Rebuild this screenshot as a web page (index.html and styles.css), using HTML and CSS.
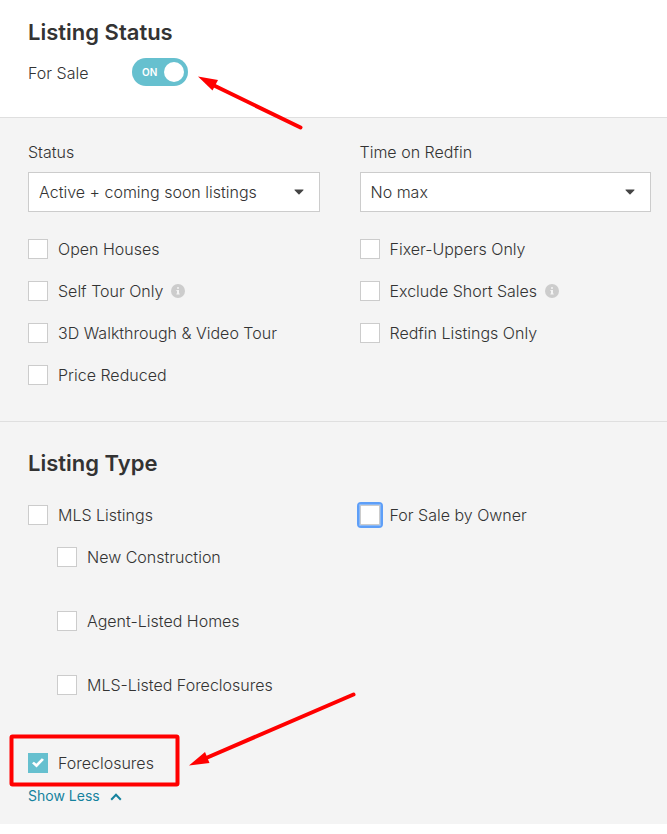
FILE: index.html
```html
<!DOCTYPE html>
<html lang="en">
<head>
  <meta charset="UTF-8">
  <meta name="viewport" content="width=device-width, initial-scale=1.0">
  <title>Listing Filters</title>
  <link rel="stylesheet" href="styles.css">
</head>
<body>
  <main class="filters">
    <section class="statusHeader">
      <h2 class="title">Listing Status</h2>
      <div class="toggleRow">
        <label class="toggleLabel" for="forSale">For Sale</label>
        <span class="toggle">
          <input type="checkbox" role="switch" id="forSale" class="toggleInput" checked>
          <span class="toggleText" aria-hidden="true">ON</span>
        </span>
      </div>
    </section>

    <section class="panel statusPanel">
      <div class="columns">
        <div class="column">
          <label class="fieldLabel" for="status">Status</label>
          <div class="selectBox">
            <select id="status" class="select">
              <option>Active + coming soon listings</option>
              <option>Active listings</option>
            </select>
            <svg class="caret" viewBox="0 0 10 6" aria-hidden="true"><path d="M1 .5h8c.5 0 .7.5.4.8L5.5 5.2a.7.7 0 0 1-1 0L.6 1.3C.3 1 .5.5 1 .5z"/></svg>
          </div>
          <div class="options">
            <label class="option"><input type="checkbox" class="check">Open Houses</label>
            <label class="option">
              <input type="checkbox" class="check">Self Tour Only
              <svg class="info" viewBox="0 0 14 14" aria-hidden="true"><circle cx="7" cy="7" r="7"/><path d="M6 3.2h2v1.6H6zM5.4 6H8v3.6h.7v1H5.4v-1H6V7h-.6z"/></svg>
            </label>
            <label class="option"><input type="checkbox" class="check">3D Walkthrough &amp; Video Tour</label>
            <label class="option"><input type="checkbox" class="check">Price Reduced</label>
          </div>
        </div>

        <div class="column">
          <label class="fieldLabel" for="time">Time on Redfin</label>
          <div class="selectBox">
            <select id="time" class="select">
              <option>No max</option>
              <option>Less than 7 days</option>
            </select>
            <svg class="caret" viewBox="0 0 10 6" aria-hidden="true"><path d="M1 .5h8c.5 0 .7.5.4.8L5.5 5.2a.7.7 0 0 1-1 0L.6 1.3C.3 1 .5.5 1 .5z"/></svg>
          </div>
          <div class="options">
            <label class="option"><input type="checkbox" class="check">Fixer-Uppers Only</label>
            <label class="option">
              <input type="checkbox" class="check">Exclude Short Sales
              <svg class="info" viewBox="0 0 14 14" aria-hidden="true"><circle cx="7" cy="7" r="7"/><path d="M6 3.2h2v1.6H6zM5.4 6H8v3.6h.7v1H5.4v-1H6V7h-.6z"/></svg>
            </label>
            <label class="option"><input type="checkbox" class="check">Redfin Listings Only</label>
          </div>
        </div>
      </div>
    </section>

    <section class="panel typePanel">
      <h2 class="title">Listing Type</h2>
      <div class="columns">
        <div class="column">
          <label class="option"><input type="checkbox" class="check">MLS Listings</label>
          <div class="subOptions">
            <label class="option"><input type="checkbox" class="check">New Construction</label>
            <label class="option"><input type="checkbox" class="check">Agent-Listed Homes</label>
            <label class="option"><input type="checkbox" class="check">MLS-Listed Foreclosures</label>
          </div>
          <label class="option"><input type="checkbox" class="check" checked>Foreclosures</label>
          <a href="#" class="showLess">Show Less
            <svg class="chevron" viewBox="0 0 12 8" aria-hidden="true"><path d="M1.2 6.8 6 1.8l4.8 5"/></svg>
          </a>
        </div>
        <div class="column">
          <label class="option"><input type="checkbox" class="check focused">For Sale by Owner</label>
        </div>
      </div>
    </section>

    <!-- red arrows and box over the form -->
    <svg class="marks" width="667" height="824" viewBox="0 0 667 824" aria-hidden="true">
      <path class="markLine" d="M300.500 127.500 212 84.500"/>
      <path class="markHead" d="M198 76.500 218 80 212.500 90.500z"/>
      <path class="markLine" d="M353.500 694.500 205 758.500"/>
      <path class="markHead" d="M189 765.500 205 752 209.500 763z"/>
      <rect class="markBox" x="11.500" y="736.500" width="166" height="48" rx="1"/>
    </svg>
  </main>
</body>
</html>
```
FILE: styles.css
```css
* {
  margin: 0;
  padding: 0;
  box-sizing: border-box;
}

body {
  font-family: Inter, sans-serif;
  font-size: 16px;
  font-weight: 300;
  line-height: 24px;
  color: #333;
  background-color: #fff;
}

.filters {
  position: relative;
}

.title {
  font-size: 22px;
  font-weight: 600;
  line-height: 28px;
}

.statusHeader {
  padding: 18px 16px 31px 28px;
}

.toggleRow {
  display: flex;
  align-items: center;
  margin-top: 12px;
}

.toggleLabel {
  width: 104px;
  padding-top: 2px;
}

.toggle {
  display: grid;
  align-items: center;
}

.toggleInput,
.toggleText {
  grid-area: 1 / 1;
}

.toggleInput {
  appearance: none;
  display: flex;
  align-items: center;
  width: 56px;
  height: 28px;
  padding: 4px;
  border-radius: 14px;
  background-color: #ccc;
  cursor: pointer;
}

.toggleInput:checked {
  justify-content: flex-end;
  background-color: #66c0cf;
}

.toggleInput::after {
  content: '';
  width: 20px;
  height: 20px;
  border-radius: 50%;
  background-color: #fff;
}

.toggleText {
  padding-left: 10px;
  font-size: 10px;
  font-weight: 600;
  color: #fff;
  pointer-events: none;
}

.panel {
  border-top: 1px solid #dfdfdf;
  background-color: #f4f4f4;
}

.statusPanel {
  padding: 22px 16px 25px 28px;
}

.typePanel {
  padding: 27px 16px 16px 28px;
}

.typePanel .columns {
  margin-top: 17px;
}

.columns {
  display: grid;
  grid-template-columns: 1fr 1fr;
  gap: 40px;
}

.fieldLabel {
  display: block;
  margin-bottom: 8px;
}

.selectBox {
  display: grid;
  align-items: center;
}

.select,
.caret {
  grid-area: 1 / 1;
}

.select {
  appearance: none;
  width: 100%;
  height: 40px;
  padding: 0 32px 0 10px;
  border: 1px solid #ccc;
  border-radius: 0;
  background-color: #fff;
  font: inherit;
  color: inherit;
}

.caret {
  justify-self: end;
  width: 10px;
  height: 6px;
  margin-right: 16px;
  fill: #444;
  pointer-events: none;
}

.options {
  margin-top: 16px;
}

.option {
  display: flex;
  align-items: center;
  height: 42px;
}

.check {
  appearance: none;
  display: flex;
  justify-content: center;
  flex-shrink: 0;
  width: 20px;
  height: 20px;
  margin-right: 10px;
  border: 1px solid #ccc;
  background-color: #fff;
}

.check:checked {
  border-color: #66c0cf;
  background-color: #66c0cf;
}

/* tick */
.check:checked::after {
  content: '';
  width: 12px;
  height: 10px;
  margin-top: 4px;
  background-color: #fff;
  clip-path: polygon(0 53%, 16% 37%, 36% 58%, 82% 2%, 100% 17%, 38% 95%);
}

.check.focused {
  outline: 2px solid #5e9ff8;
  outline-offset: 1px;
  border-radius: 1px;
  box-shadow: 0 0 0 1px #8ab8f5;
}

.info {
  width: 14px;
  height: 14px;
  margin-left: 8px;
  fill: #ccc;
}

.info path {
  fill: #f4f4f4;
}

.subOptions {
  display: flex;
  flex-direction: column;
  gap: 22px;
  margin-bottom: 36px;
  padding-left: 29px;
}

.showLess {
  display: flex;
  align-items: center;
  width: max-content;
  font-size: 14px;
  font-weight: 400;
  color: #15829e;
  text-decoration: none;
}

.chevron {
  width: 12px;
  height: 8px;
  margin-top: 2px;
  margin-left: 10px;
  fill: none;
  stroke: #15829e;
  stroke-width: 2;
}

.marks {
  position: absolute;
  top: 0;
  left: 0;
  pointer-events: none;
}

.markLine,
.markBox {
  fill: none;
  stroke: #f00;
  stroke-width: 4;
  stroke-linecap: round;
}

.markHead {
  fill: #f00;
}
```
